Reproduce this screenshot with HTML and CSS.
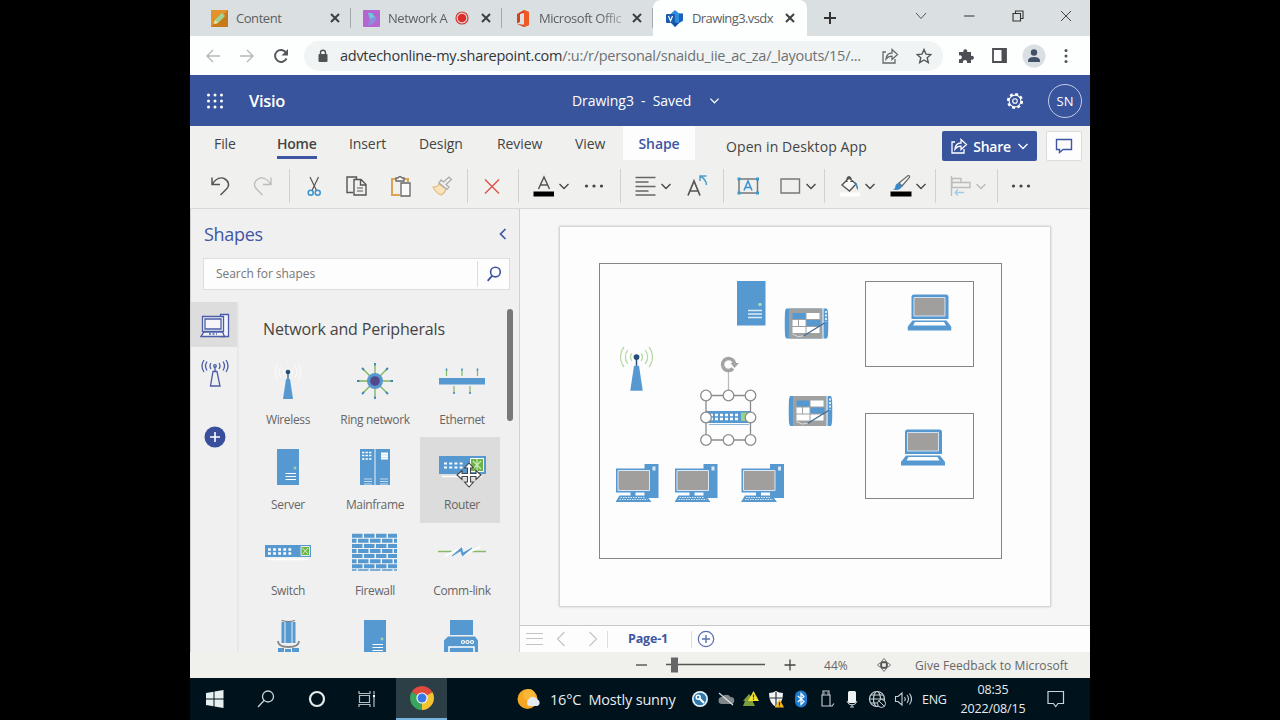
FILE: index.html
```html
<!DOCTYPE html>
<html lang="en">
<head>
    <meta charset="UTF-8">
    <meta name="viewport" content="width=device-width, initial-scale=1.0">
    <title>Drawing3.vsdx</title>
    <link rel="stylesheet" href="styles.css">
</head>
<body>
    <!-- Shared icons and stencil shapes -->
    <svg class="defs" width="0" height="0">
        <symbol id="close" viewBox="0 0 12 12"><path d="M2 2l8 8M10 2l-8 8" fill="none" stroke="currentColor" stroke-width="2"/></symbol>
        <symbol id="chevron" viewBox="0 0 12 12"><path d="M1.5 4L6 8.500 10.500 4" fill="none" stroke="currentColor" stroke-width="1.3"/></symbol>
        <symbol id="dots" viewBox="0 0 24 24"><g fill="#444"><circle cx="4.500" cy="12" r="1.6"/><circle cx="12" cy="12" r="1.6"/><circle cx="19.500" cy="12" r="1.6"/></g></symbol>
        <symbol id="share" viewBox="0 0 18 18"><path d="M5 5H2v11h12v-4M5 12c.5-4 3-6 6-6V2.500l5.500 5-5.500 5V9.200c-3 0-4.500.8-6 2.800z" fill="none" stroke="currentColor" stroke-width="1.3"/></symbol>

        <symbol id="wireless" viewBox="0 0 48 48">
            <path d="M22 21h4l3 20H19z" fill="#5698d0"/>
            <path d="M24 14v7" stroke="#264f78" stroke-width="1.200"/>
            <circle cx="24" cy="14" r="2.300" fill="#264f78"/>
            <path d="M20.300 11a5 5 0 0 0 0 6M27.700 11a5 5 0 0 1 0 6M17 8.500a9 9 0 0 0 0 11M31 8.500a9 9 0 0 1 0 11M14 6a13 13 0 0 0 0 16M34 6a13 13 0 0 1 0 16" fill="none" stroke="currentColor" stroke-width="1"/>
        </symbol>
        <symbol id="ring" viewBox="0 0 48 48">
            <path d="M24 7v32M8 23h32M12.500 11.500l23 23M35.500 11.500l-23 23" stroke="#7ab55c" stroke-width="1.300"/>
            <path d="M24 5v2.500M24 38.500V41M6 23h2.500M39.500 23H42M11 10l2 2M35 34l2 2M37 10l-2 2M13 34l-2 2" stroke="#3a86b8" stroke-width="1.800"/>
            <circle cx="24" cy="23" r="8" fill="#5698d0"/><circle cx="24" cy="23" r="4.800" fill="#54488a"/>
        </symbol>
        <symbol id="ethernet" viewBox="0 0 48 48">
            <path d="M8.500 12v6M24 12v6M39.500 12v6M16 28v7M32 28v7" stroke="#82b966" stroke-width="1.200"/>
            <path d="M8.500 10.500v2M24 10.500v2M39.500 10.500v2M16 34v2M32 34v2" stroke="#3a86b8" stroke-width="1.500"/>
            <path d="M1 20h46v6.500H1z" fill="#5698d0"/>
        </symbol>
        <symbol id="server" viewBox="0 0 48 48">
            <path d="M13 6h22v36H13z" fill="#5698d0"/>
            <path d="M21.500 30.500H32M21.500 33.500H32M21.500 36.500H32" stroke="#fff" stroke-width="1.100"/>
            <circle cx="31" cy="25" r="1.400" fill="#9fd6b0"/>
        </symbol>
        <symbol id="mainframe" viewBox="0 0 48 48">
            <path d="M9 6h14.500v36H9zM24.500 6H39v36H24.500z" fill="#5698d0"/>
            <path d="M11 9.500h9.500M11 12.500h9.500M11 16h9.500" stroke="#fff" stroke-width="1.700" stroke-dasharray="2.400 1.100"/>
            <path d="M30 9.500h7v7h-7z" fill="#fff"/><path d="M30 12h7M30 14.500h7" stroke="#b7d3ec" stroke-width=".7"/>
            <path d="M13 36h8M13 38.500h8M13 41h8M29 36h8M29 38.500h8M29 41h8" stroke="#c3daef"/>
        </symbol>
        <symbol id="router" viewBox="0 0 48 48">
            <path d="M1 13h47v18H1z" fill="#5698d0"/>
            <path d="M6 20.500h20M6 24.500h20" stroke="#fff" stroke-width="2.200" stroke-dasharray="3 2.200"/>
            <path d="M32.500 15.500h13v13h-13z" fill="#6cb545" stroke="#fff"/>
            <path d="M35 18l8 8M43 18l-8 8M39 16v12" stroke="#c9ecb4" stroke-width="1.200"/>
            <path d="M4 33.500h40" stroke="#fff" stroke-width="1.500"/>
        </symbol>
        <symbol id="switch" viewBox="0 0 48 48">
            <path d="M1 16h46v12H1z" fill="#5698d0"/>
            <path d="M4 20.500h25M4 24.500h25" stroke="#fff" stroke-width="2.400" stroke-dasharray="2.800 2.300"/>
            <path d="M37 17.500h8.500v9H37z" fill="#6cb545" stroke="#fff" stroke-width=".8"/>
            <path d="M38.500 19l5.500 6M44 19l-5.500 6" stroke="#d5f0c4"/>
            <path d="M4 30.500h40" stroke="#fff" stroke-width="1.300"/>
        </symbol>
        <symbol id="firewall" viewBox="0 0 48 48">
            <path d="M1 6.700h45M1 16.900h45M1 27.100h45M1 37.300h45" stroke="#5698d0" stroke-width="4" stroke-dasharray="10.500 1.500"/>
            <path d="M1 11.800h45M1 22h45M1 32.200h45" stroke="#5698d0" stroke-width="4" stroke-dasharray="10.500 1.500" stroke-dashoffset="6"/>
            <path d="M1 41h45" stroke="#5698d0" stroke-width="1.600" stroke-dasharray="10.500 1.500" stroke-dashoffset="6"/>
        </symbol>
        <symbol id="comm" viewBox="0 0 48 48">
            <path d="M0 22.500h13.500M34 22.500h14" stroke="#86b967" stroke-width="1.500"/>
            <path d="M7 27l18-9M24 27l18-9" stroke="#fff" stroke-width="1.500"/>
            <path d="M14 27l9.500-8.500 1.500 5.500 9-5-9.500 8-1.800-5.200z" fill="#5698d0" stroke="#5698d0" stroke-width=".8"/>
        </symbol>
        <symbol id="tower" viewBox="0 0 48 48">
            <path d="M17.500 8h3v21h-3zM21.500 8h6v21h-6zM28.500 8h3v21h-3z" fill="#5698d0"/>
            <path d="M17.500 6.500q7 2 13.500 0" fill="none" stroke="#777" stroke-width="1.200"/>
            <path d="M14 27q0 6 10.500 6T35 27" fill="none" stroke="#888" stroke-width="1.800"/>
            <path d="M14 34h6v14h-6zM21 35h6v13h-6zM28 34h7v14h-7z" fill="#5698d0"/>
        </symbol>
        <symbol id="printer" viewBox="0 0 48 48">
            <path d="M12 6h23v15H12zM10 22.500h27l3 4V42H6V26.500z" fill="#5698d0"/>
            <path d="M11 40v-7h25v7" fill="none" stroke="#fff" stroke-width="1.500"/>
            <g fill="none" stroke="#fff" stroke-width="1.200"><circle cx="25" cy="28" r="1.500"/><circle cx="29.500" cy="28" r="1.500"/><circle cx="34" cy="28" r="1.500"/></g>
        </symbol>

        <symbol id="pc" viewBox="0 0 44 40">
            <path d="M29 .5h14v34H29z" fill="#5698d0"/><path d="M37 3h3v4h-3z" fill="#d9e8f5"/>
            <path d="M.5 5h35.500v24H.5z" fill="#5698d0"/>
            <path d="M2.500 7h31.500v20H2.500z" fill="#a09f9d" stroke="#d8e8f6"/>
            <path d="M15 28h5v4h-5zM4 32h27l5 6.500H0z" fill="#5698d0"/>
            <path d="M5 34h25M4 36h28" stroke="#d8e8f6" stroke-width="1" stroke-dasharray="1.500 1"/>
        </symbol>
        <symbol id="laptop" viewBox="0 0 44 37">
            <path d="M4 3q0-2.500 2.500-2.500h32q2.500 0 2.500 2.500v22H4z" fill="#5698d0"/>
            <path d="M6.500 3.500h31v18.500h-31z" fill="#a09f9d" stroke="#cfe2f4"/>
            <path d="M5 26.500h34l5 6.500v3.500H0V33z" fill="#5698d0"/><path d="M7.500 28h29l2 3.500h-33z" fill="#fff"/>
        </symbol>
        <symbol id="tablet" viewBox="0 0 44 31">
            <path d="M2 .5h40q2 0 2 15t-2 15H2Q0 30.500 0 15.500T2 .5z" fill="#5698d0"/>
            <path d="M4.500.5h33.500v30H4.500z" fill="#9fa0a0"/><path d="M38.500 0v31" stroke="#fff"/>
            <path d="M8 5h13v6H8z" fill="#5698d0"/><path d="M22 5h13v6H22z" fill="#fff"/>
            <path d="M8 12h5.500v6H8zM14.500 12H21v6h-6.500z" fill="#fff"/><path d="M22 12h14v6H22z" fill="#5698d0"/>
            <path d="M8 19h13v6H8zM22 19h13v6H22z" fill="#fff"/>
            <path d="M19 28l21-13" stroke="#42688f" stroke-width="1.300"/><path d="M8 26q5 4 11 2" fill="none" stroke="#ddd"/>
            <path d="M41.500 3v11" stroke="#dcebf8" stroke-width="2" stroke-dasharray="2 1.500"/>
        </symbol>
    </svg>

    <div class="screen">
        <div class="tabstrip">
            <div class="tab first">
                <svg width="17" height="17" viewBox="0 0 17 17"><path d="M0 0h17v17H0z" fill="#e3932b"/><path d="M17 0v17H0z" fill="#c97a18"/><path d="M3 14l1-4 7-7 3 3-7 7z" fill="#9bd79c"/><path d="M3 14l1-4 3 3z" fill="#f6e3a8"/></svg>
                <span class="tab-title">Content</span>
                <svg class="x" width="12" height="12"><use href="#close"/></svg>
            </div>
            <div class="tab">
                <svg width="17" height="17" viewBox="0 0 17 17"><rect width="17" height="17" rx="1" fill="#b565cf"/><path d="M5 3h4l5 6-5 6H5l2-6z" fill="#8c8edb"/><path d="M5 3h4l3 4-5 2z" fill="#69c9da"/></svg>
                <span class="tab-title fade">Network A</span>
                <svg class="rec" width="14" height="14" viewBox="0 0 14 14"><circle cx="7" cy="7" r="6" fill="none" stroke="#d93a35" stroke-width="1.200"/><circle cx="7" cy="7" r="4.300" fill="#dc2f2a"/></svg>
                <svg class="x" width="12" height="12"><use href="#close"/></svg>
            </div>
            <div class="tab">
                <svg width="17" height="17" viewBox="0 0 17 17"><path d="M10 0l5 2v13l-5 2-7-3 7 .8V3L6 4v8l-3 1.500V4z" fill="#d8401c"/><path d="M10 0l5 2v13l-5 2z" fill="#ef5a24"/></svg>
                <span class="tab-title fade">Microsoft Offic</span>
                <svg class="x" width="12" height="12"><use href="#close"/></svg>
            </div>
            <div class="tab active">
                <svg width="17" height="17" viewBox="0 0 17 17"><path d="M9 0l4 3.500L17 4v7l-4 2-4 4-4-4V3.500z" fill="#2e8de0"/><path d="M13 3.500h4V10l-4 3z" fill="#1b62b8"/><path d="M5 12l4 5 4-4z" fill="#1550a0"/><rect y="4" width="9" height="9" rx="1" fill="#1a5cae"/><path d="M2.500 6l2 5 2-5" fill="none" stroke="#fff" stroke-width="1.200"/></svg>
                <span class="tab-title">Drawing3.vsdx</span>
                <svg class="x" width="12" height="12"><use href="#close"/></svg>
            </div>
            <svg class="newtab" width="14" height="14" viewBox="0 0 14 14"><path d="M7 1v12M1 7h12" stroke="#333" stroke-width="2"/></svg>
            <div class="window-buttons">
                <svg width="12" height="12" viewBox="0 0 12 12"><path d="M1 3l5 5.500L11 3" fill="none" stroke="#555"/></svg>
                <svg width="12" height="12" viewBox="0 0 12 12"><path d="M1 6h10.500" stroke="#333"/></svg>
                <svg width="12" height="12" viewBox="0 0 12 12"><path d="M1 3.500h7.500V11H1zM3.500 3V1H11v7.500H9" fill="none" stroke="#333" stroke-width="1.100"/></svg>
                <svg width="12" height="12" viewBox="0 0 12 12"><path d="M1 1l10 10M11 1L1 11" stroke="#444"/></svg>
            </div>
        </div>

        <div class="addressbar">
            <svg width="16" height="14" viewBox="0 0 16 14"><path d="M15 7H2M8 1L2 7l6 6" fill="none" stroke="#b4b7b9" stroke-width="1.400"/></svg>
            <svg width="16" height="14" viewBox="0 0 16 14"><path d="M1 7h13M8 1l6 6-6 6" fill="none" stroke="#b4b7b9" stroke-width="1.400"/></svg>
            <svg width="16" height="16" viewBox="0 0 16 16"><path d="M13.500 10.500A6 6 0 1 1 13 4.500" fill="none" stroke="#55585b" stroke-width="1.900"/><path d="M15 1v6.500H8.500z" fill="#55585b"/></svg>
            <div class="omnibox">
                <svg width="12" height="14" viewBox="0 0 12 14"><rect x="1.500" y="5" width="9" height="8" rx="1" fill="#505356"/><path d="M3.500 6V3.700a2.500 2.500 0 0 1 5 0V6" fill="none" stroke="#505356" stroke-width="1.400"/></svg>
                <span class="url">advtechonline-my.sharepoint.com<span>/:u:/r/personal/snaidu_iie_ac_za/_layouts/15/...</span></span>
                <svg class="send" width="18" height="18"><use href="#share"/></svg>
                <svg width="16" height="16" viewBox="0 0 16 16"><path d="M8 1.500l2 4.600 4.900.4-3.700 3.200 1.100 4.900L8 12l-4.300 2.600 1.100-4.900L1.100 6.500 6 6.100z" fill="none" stroke="#55585b" stroke-width="1.400"/></svg>
            </div>
            <div class="extensions">
                <svg width="17" height="16" viewBox="0 0 17 16"><path d="M1 4h4.500a2 2 0 1 1 3.600 0H13v4a2 2 0 1 1 0 3.600V15H9a2.200 2.200 0 1 0-4 0H1v-4a2 2 0 1 0 0-3.600z" fill="#4b4f53"/></svg>
                <svg width="15" height="15" viewBox="0 0 15 15"><path d="M1 1h13v13H1z" fill="none" stroke="#4b4f53" stroke-width="1.800"/><path d="M9.500 1H14v13H9.500z" fill="#4b4f53"/></svg>
                <svg class="profile" width="24" height="24" viewBox="0 0 24 24"><circle cx="12" cy="12" r="11.500" fill="#dadfe3"/><circle cx="12" cy="8.500" r="3.200" fill="#42506a"/><path d="M6 17q0-4 6-4t6 4v1H6z" fill="#42506a"/></svg>
                <svg width="6" height="16" viewBox="0 0 6 16"><g fill="#505356"><circle cx="3" cy="2.500" r="1.500"/><circle cx="3" cy="8" r="1.500"/><circle cx="3" cy="13.500" r="1.500"/></g></svg>
            </div>
        </div>

        <header class="appbar">
            <svg width="18" height="18" viewBox="0 0 18 18"><path d="M2.500 3h14M2.500 9h14M2.500 15h14" stroke="#fff" stroke-width="3" stroke-linecap="round" stroke-dasharray="0 6.500"/></svg>
            <h1>Visio</h1>
            <div class="doc-name">Drawing3&nbsp; -&nbsp; Saved <svg width="11" height="11"><use href="#chevron"/></svg></div>
            <svg class="gear" width="18" height="18" viewBox="0 0 18 18"><circle cx="9" cy="9" r="7" fill="none" stroke="#fff" stroke-width="2.200" stroke-dasharray="2.900 2.600"/><circle cx="9" cy="9" r="5.900" fill="none" stroke="#fff" stroke-width="1.100"/><circle cx="9" cy="9" r="2.300" fill="none" stroke="#fff" stroke-width="1.100"/></svg>
            <div class="avatar">SN</div>
        </header>

        <nav class="ribbon-tabs">
            <a class="file">File</a>
            <a class="home">Home</a>
            <a>Insert</a>
            <a>Design</a>
            <a>Review</a>
            <a>View</a>
            <a class="shape">Shape</a>
            <a class="desktop">Open in Desktop App</a>
            <button class="share-btn"><svg width="18" height="18"><use href="#share"/></svg>Share<svg width="12" height="12"><use href="#chevron"/></svg></button>
            <button class="comment-btn"><svg width="18" height="16" viewBox="0 0 18 16"><path d="M1.500 1.500h15v10H8l-3.500 3v-3h-3z" fill="none" stroke="#3f57a3" stroke-width="1.400"/></svg></button>
        </nav>

        <div class="toolbar">
            <svg width="24" height="24" viewBox="0 0 24 24"><path d="M4 3.500v7h8M4 10.500C8 4.500 13 2.500 17 5s5 7 1 10.500L12.500 21" fill="none" stroke="#555" stroke-width="1.500"/></svg>
            <svg width="24" height="24" viewBox="0 0 24 24"><path d="M20 3.500v7h-8M20 10.500C16 4.500 11 2.500 7 5s-5 7-1 10.500L11.500 21" fill="none" stroke="#bbb" stroke-width="1.300"/></svg>
            <i class="sep"></i>
            <svg width="24" height="24" viewBox="0 0 24 24"><path d="M8 3l6.500 13.500M16.500 3L10 16.500" stroke="#555" stroke-width="1.200"/><g fill="none" stroke="#3b93cf" stroke-width="1.500"><circle cx="8.700" cy="18.700" r="2.500"/><circle cx="15.700" cy="18.700" r="2.500"/></g></svg>
            <svg width="24" height="24" viewBox="0 0 24 24"><path d="M9 18.500H3V3h9.500v2.500M10 5.500h7l5 5V21H10zM16.500 5.500v5.500H22" fill="none" stroke="#555" stroke-width="1.400"/><path d="M13 14h6M13 17h6" stroke="#555"/></svg>
            <svg width="24" height="24" viewBox="0 0 24 24"><path d="M7 5H3v16h8M15 5h4v3" fill="none" stroke="#e0a353" stroke-width="2"/><path d="M7 7V4h2q2-3 4 0h2v3zM12 9h9v13h-9z" fill="#fafafa" stroke="#666" stroke-width="1.300"/></svg>
            <svg width="24" height="24" viewBox="0 0 24 24"><path d="M3 13q5 0 6-3l7 5q-1 4-5 6-5-2-8-8z" fill="#f8e3bf" stroke="#e6bd80" stroke-width="1.200"/><path d="M9 9l8 6.500 2-2.500-3-2.500 5.500-5-2.500-2.500-5.500 5L11 6z" fill="#eee" stroke="#aaa" stroke-width="1.200"/></svg>
            <i class="sep"></i>
            <svg width="24" height="24" viewBox="0 0 24 24"><path d="M5 5.500l14 14M19 5.500l-14 14" stroke="#e0504c" stroke-width="1.400"/></svg>
            <i class="sep"></i>
            <svg width="24" height="24" viewBox="0 0 24 24"><path d="M6.500 15L12 3l5.500 12M8.500 11h7" fill="none" stroke="#555" stroke-width="1.500"/><path d="M1.500 17.500H22V22.500H1.500z"/></svg>
            <svg width="12" height="12"><use href="#chevron"/></svg>
            <svg width="24" height="24"><use href="#dots"/></svg>
            <i class="sep"></i>
            <svg width="24" height="24" viewBox="0 0 24 24"><path d="M2.500 3.500h20M2.500 8h13M2.500 12.500h20M2.500 17h13M2.500 21h20" stroke="#666" stroke-width="1.300"/></svg>
            <svg width="12" height="12"><use href="#chevron"/></svg>
            <svg width="24" height="24" viewBox="0 0 24 24"><path d="M2 21.500L8 7l6 14.500M4 17h8" fill="none" stroke="#555" stroke-width="1.700"/><path d="M14 7V2h6.500M14.500 2.500q5.500 2.500 6 8.500" fill="none" stroke="#4f9fce" stroke-width="1.500"/></svg>
            <i class="sep"></i>
            <svg width="24" height="24" viewBox="0 0 24 24"><path d="M3 5h18.500v14H3z" fill="none" stroke="#777" stroke-width="1.500"/><path d="M8 16.500l4-9.500 4 9.500M9.500 13.500h5" fill="none" stroke="#3b93cf" stroke-width="1.500"/><path d="M1.500 3.500h3v3h-3zM20 3.500h3v3h-3zM1.500 17.500h3v3h-3zM20 17.500h3v3h-3z" fill="#3b9ace"/></svg>
            <svg width="24" height="24" viewBox="0 0 24 24"><path d="M3 5h18.500v14H3z" fill="none" stroke="#777" stroke-width="1.400"/></svg>
            <svg width="12" height="12"><use href="#chevron"/></svg>
            <i class="sep"></i>
            <svg width="24" height="24" viewBox="0 0 24 24"><path d="M2 18.500h20v4H2z" fill="#fff"/><path d="M4 11l7-7 7 6-6.500 7zM9 8V4.500q2-3.500 4 0V8" fill="#fafafa" stroke="#555" stroke-width="1.400"/><path d="M15 8q5-1 5 8-2-1-2-6z" fill="#3b7fb5"/></svg>
            <svg width="12" height="12"><use href="#chevron"/></svg>
            <svg width="24" height="24" viewBox="0 0 24 24"><path d="M1.500 17.500H22.500V22.500H1.500z"/><path d="M10 9L19 1.500q2.500 0 1.200 2.200L13 12z" fill="#f5f5f5" stroke="#666" stroke-width="1.200"/><path d="M9.500 9l3.500 3.500Q11 17 4 15.500q3-2 2.500-4Q7.500 9 9.500 9z" fill="#3888c8"/></svg>
            <svg width="12" height="12"><use href="#chevron"/></svg>
            <i class="sep"></i>
            <svg width="24" height="24" viewBox="0 0 24 24"><path d="M3.500 2v20M4 4.500h9v4H4zM4 8.500h18v5H4z" fill="none" stroke="#bcbcbc" stroke-width="1.400"/><path d="M16 18.500H7M10 15.500l-3 3 3 3" fill="none" stroke="#a3cbe2" stroke-width="1.300"/></svg>
            <svg class="off" width="12" height="12"><use href="#chevron"/></svg>
            <i class="sep"></i>
            <svg width="24" height="24"><use href="#dots"/></svg>
        </div>

        <main>
            <aside class="shapes">
                <div class="shapes-head">
                    <h2>Shapes</h2>
                    <svg width="8" height="12" viewBox="0 0 8 12"><path d="M6.500 1L1.500 6l5 5" fill="none" stroke="#3f57a3" stroke-width="1.700"/></svg>
                </div>
                <div class="search">
                    <span>Search for shapes</span>
                    <svg width="32" height="26" viewBox="0 0 32 26"><circle cx="18" cy="11" r="5" fill="none" stroke="#3f57a3" stroke-width="1.700"/><path d="M14.500 15L10 20" stroke="#3f57a3" stroke-width="1.900"/></svg>
                </div>
                <div class="stencils">
                    <div class="rail">
                        <div class="rail-item selected">
                            <svg width="30" height="28" viewBox="0 0 30 28"><g fill="#f5f5fa" stroke="#4a5da6" stroke-width="1.300"><path d="M20.500 2.500h8v22h-8z"/><path d="M2.500 4.500h21v15h-21z"/><path d="M5 7h16v10H5z"/><path d="M4 20h18.500l2 4.500H1z"/></g><path d="M9 22h8" stroke="#4a5da6" stroke-width="1.500" stroke-dasharray="2 1.500"/></svg>
                        </div>
                        <div class="rail-item">
                            <svg width="30" height="30" viewBox="0 0 30 30"><g fill="none" stroke="#4a5da6" stroke-width="1.300"><path d="M13 13.500h4l3 14.500h-9.500zM15 8.500v5"/><circle cx="15" cy="8" r="1.300"/><path d="M11 5q-2 3 0 6M19 5q2 3 0 6M7 3.500q-3 4.500 0 9M23 3.500q3 4.500 0 9M4 2q-4 6 0 12M26 2q4 6 0 12"/></g></svg>
                        </div>
                        <svg class="add" width="22" height="22" viewBox="0 0 22 22"><circle cx="11" cy="11" r="10.500" fill="#3a4f9b"/><path d="M11 6v10M6 11h10" stroke="#fff" stroke-width="1.600"/></svg>
                    </div>
                    <div class="gallery">
                        <h3>Network and Peripherals</h3>
                        <div class="tiles">
                            <div class="tile white-waves"><svg width="48" height="48"><use href="#wireless"/></svg>Wireless</div>
                            <div class="tile"><svg width="48" height="48"><use href="#ring"/></svg>Ring network</div>
                            <div class="tile"><svg width="48" height="48"><use href="#ethernet"/></svg>Ethernet</div>
                            <div class="tile"><svg width="48" height="48"><use href="#server"/></svg>Server</div>
                            <div class="tile"><svg width="48" height="48"><use href="#mainframe"/></svg>Mainframe</div>
                            <div class="tile hover"><svg width="48" height="48"><use href="#router"/></svg>Router
                                <svg class="cursor" width="26" height="26" viewBox="0 0 26 26"><path d="M13 1l4.500 5H14.500v5.500H20V8.500l5 4.500-5 4.500V14.500h-5.500V20h3L13 25l-4.500-5h3v-5.500H6v3L1 13l5-4.500v3h5.500V6h-3z" fill="#fff" stroke="#444" stroke-width="1.100"/></svg>
                            </div>
                            <div class="tile"><svg width="48" height="48"><use href="#switch"/></svg>Switch</div>
                            <div class="tile"><svg width="48" height="48"><use href="#firewall"/></svg>Firewall</div>
                            <div class="tile"><svg width="48" height="48"><use href="#comm"/></svg>Comm-link</div>
                            <div class="tile"><svg width="48" height="48"><use href="#tower"/></svg></div>
                            <div class="tile"><svg width="48" height="48"><use href="#server"/></svg></div>
                            <div class="tile"><svg width="48" height="48"><use href="#printer"/></svg></div>
                        </div>
                    </div>
                    <div class="scrollbar"></div>
                </div>
            </aside>

            <section class="workspace">
                <div class="canvas">
                    <svg class="page" width="490" height="379" viewBox="0 0 490 379">
                        <g fill="none" stroke="#858585" shape-rendering="crispEdges">
                            <path d="M39.500 36.500h402v295h-402z"/>
                            <path d="M305.500 54.500h108v85h-108z"/>
                            <path d="M305.500 186.500h108v85h-108z"/>
                        </g>
                        <path d="M177 54h28.500v44.500H177z" fill="#5698d0"/>
                        <path d="M188 83.500h14M188 87h14M188 90.500h14" stroke="#dcebf8" stroke-width="1.300"/>
                        <circle cx="200" cy="77.500" r="1.800" fill="#a9dcb9"/>
                        <svg class="green-waves" x="46.500" y="112.500" width="60" height="60"><use href="#wireless"/></svg>
                        <use href="#tablet" x="224.500" y="81" width="44" height="31"/>
                        <use href="#tablet" x="228.500" y="168.500" width="44" height="31"/>
                        <use href="#laptop" x="347.500" y="67" width="44" height="37"/>
                        <use href="#laptop" x="341" y="202" width="44" height="37"/>
                        <use href="#pc" x="55.500" y="236.500" width="44" height="40"/>
                        <use href="#pc" x="114.500" y="236.500" width="44" height="40"/>
                        <use href="#pc" x="181" y="236.500" width="44" height="40"/>
                        <!-- selected switch with its handles -->
                        <path d="M146 184h45v12h-45z" fill="#5698d0"/>
                        <path d="M150 188h30M150 192h30" stroke="#fff" stroke-width="2.400" stroke-dasharray="3 2"/>
                        <path d="M181 185.500h8v8.500h-8z" fill="#9bd386"/><path d="M149 197.500h40" stroke="#8bb7dd"/>
                        <path d="M168.500 143v25" stroke="#bbb" stroke-width="1.200"/>
                        <g fill="#fff" stroke="#8c8c8c" stroke-width="1.300">
                            <path d="M146 168.500h44.500v44.500H146z" fill="none"/>
                            <circle cx="146" cy="168.500" r="5.300"/><circle cx="168.500" cy="168.500" r="5.300"/><circle cx="190.500" cy="168.500" r="5.300"/>
                            <circle cx="146" cy="190.500" r="5.300"/><circle cx="190.500" cy="190.500" r="5.300"/>
                            <circle cx="146" cy="213" r="5.300"/><circle cx="168.500" cy="213" r="5.300"/><circle cx="190.500" cy="213" r="5.300"/>
                        </g>
                        <path d="M173 141.500a6 6 0 1 1 1.500-4" fill="none" stroke="#a3a3a3" stroke-width="3.500"/>
                        <path d="M170.500 136h8.500l-4.500 5z" fill="#a3a3a3"/>
                    </svg>
                </div>
                <div class="page-tabs">
                    <svg width="18" height="14" viewBox="0 0 18 14"><path d="M0 1.500h17M0 6.500h17M0 12.500h17" stroke="#c4c4c4" stroke-width="1.200"/></svg>
                    <svg width="10" height="16" viewBox="0 0 10 16"><path d="M8.500 1L1.500 8l7 7" fill="none" stroke="#c4c4c4" stroke-width="1.200"/></svg>
                    <svg width="10" height="16" viewBox="0 0 10 16"><path d="M1.500 1l7 7-7 7" fill="none" stroke="#c4c4c4" stroke-width="1.200"/></svg>
                    <span class="page-name">Page-1</span>
                    <svg width="18" height="18" viewBox="0 0 18 18"><circle cx="9" cy="9" r="7.700" fill="none" stroke="#5a6fae" stroke-width="1.200"/><path d="M9 5v8M5 9h8" stroke="#5a6fae" stroke-width="1.400"/></svg>
                </div>
            </section>
        </main>

        <div class="statusbar">
            <svg width="11" height="12" viewBox="0 0 11 12"><path d="M0 6h11" stroke="#444" stroke-width="1.300"/></svg>
            <svg width="111" height="18" viewBox="0 0 111 18"><path d="M12 8.500h99" stroke="#555" stroke-width="1.300"/><path d="M17 1.500h7v15h-7z" fill="#666"/></svg>
            <svg width="12" height="12" viewBox="0 0 12 12"><path d="M.5 6h11M6 .5v11" stroke="#444" stroke-width="1.300"/></svg>
            <span>44%</span>
            <svg width="14" height="14" viewBox="0 0 14 14"><path d="M4.500 4.500h5v5h-5z" fill="none" stroke="#555" stroke-width="1.300"/><path d="M7 .5l2.500 3h-5zM7 13.500l2.500-3h-5zM.5 7l3-2.500v5zM13.500 7l-3-2.500v5z" fill="none" stroke="#666" stroke-width=".9"/></svg>
            <span class="feedback">Give Feedback to Microsoft</span>
        </div>

        <footer class="taskbar">
            <svg width="18" height="18" viewBox="0 0 18 18"><path d="M0 3l7.500-1.200v6.700H0zM8.500 1.600L17.500 0v8.500h-9zM0 9.500h7.500v6.700L0 15zM8.500 9.500h9V18l-9-1.600z" fill="#e8eff0"/></svg>
            <svg width="18" height="18" viewBox="0 0 18 18"><circle cx="11" cy="6.500" r="5.500" fill="none" stroke="#ccd4d6" stroke-width="1.300"/><path d="M7 10.500L1 17" stroke="#ccd4d6" stroke-width="1.300"/></svg>
            <svg width="18" height="18" viewBox="0 0 18 18"><circle cx="9" cy="9" r="7" fill="none" stroke="#e4eaea" stroke-width="2.200"/></svg>
            <svg width="18" height="18" viewBox="0 0 18 18"><path d="M1 1v2.500h11V1M1 17v-2.500h11V17M1.500 5.500h10v7h-10zM16 1v3.500M16 8v9" fill="none" stroke="#b4bec1" stroke-width="1.200"/><path d="M15 5h2v2.500h-2z" fill="#fff"/></svg>
            <div class="task">
                <svg width="24" height="24" viewBox="0 0 24 24"><path d="M12 12L1.610 6A12 12 0 0 1 22.390 6z" fill="#df4a3c"/><path d="M12 12L22.390 6A12 12 0 0 1 12 24z" fill="#f4c430"/><path d="M12 12v12A12 12 0 0 1 1.610 6z" fill="#3ba55c"/><path d="M12 6h10.400L12 12z" fill="#df4a3c"/><path d="M17 15l-5 9V12z" fill="#f4c430"/><path d="M6.800 15L1.610 6 12 12z" fill="#3ba55c"/><circle cx="12" cy="12" r="5.600" fill="#fff"/><circle cx="12" cy="12" r="4.500" fill="#3b78e7"/></svg>
            </div>
            <svg width="24" height="22" viewBox="0 0 24 22"><circle cx="10.500" cy="11" r="10" fill="#f5a623"/><circle cx="12" cy="7" r="6" fill="#fbb838"/><path d="M12 18a4 4 0 0 1 0-7 5 5 0 0 1 8.500.5 3.500 3.500 0 0 1 0 6.500z" fill="#e3e9f1"/></svg>
            <span class="weather">16°C&nbsp; Mostly sunny</span>
            <svg width="18" height="18" viewBox="0 0 18 18"><circle cx="9" cy="9" r="8" fill="#e5f3fa"/><circle cx="9" cy="9" r="6.300" fill="#2d78ad"/><path d="M8 8l5 5" stroke="#fff" stroke-width="2"/><circle cx="7.200" cy="7.200" r="2" fill="none" stroke="#fff" stroke-width="1.400"/></svg>
            <svg width="18" height="18" viewBox="0 0 18 18"><path d="M5 14a3.500 3.500 0 0 1 0-7 5 5 0 0 1 8.500 0 3.500 3.500 0 0 1 .5 7z" fill="#7f878b"/><path d="M2 3l14 12" stroke="#dce1e3" stroke-width="1.200"/></svg>
            <svg width="18" height="18" viewBox="0 0 18 18"><path d="M1 16l2-5H1l6-7 4 5v3l2 4z" fill="#7f9c3c"/><path d="M11.500 1l5.500 10H6z" fill="#f4e430"/><path d="M11.500 4.500v3M11.500 8.500v1.300" stroke="#333" stroke-width="1.200"/></svg>
            <svg width="18" height="18" viewBox="0 0 18 18"><path d="M9 1q3 2 7 2 0 10-7 14Q2 13 2 3q4 0 7-2z" fill="#f2f4f4"/><path d="M9 2v14M2.500 8h13" stroke="#26343c" stroke-width="1.200"/><path d="M12.500 9l4.500 8.500H8z" fill="#f4b71f"/><path d="M12.500 12v3M12.500 15.500v1" stroke="#443300" stroke-width="1.200"/></svg>
            <svg width="18" height="18" viewBox="0 0 18 18"><rect x="3" y=".5" width="12" height="17" rx="6" fill="#1c7ed0"/><path d="M5.800 6l6.200 5.500-3 3V3.500l3 3L5.800 12" fill="none" stroke="#fff" stroke-width="1.200"/></svg>
            <svg width="18" height="18" viewBox="0 0 18 18"><path d="M6 5V1h6v4M5 5h8v11H5zM13 16h2l2-2.500M7.500 2.500v1M10.500 2.500v1" fill="none" stroke="#c8d0d3" stroke-width="1.100"/></svg>
            <svg width="18" height="18" viewBox="0 0 18 18"><rect x="5" y="1" width="8" height="12" rx="1.500" fill="#eef2f2"/><path d="M4 11q1 4 5 4t5-4M9 14v3M7 17h4" fill="none" stroke="#c8d0d3"/></svg>
            <svg width="18" height="18" viewBox="0 0 18 18"><g fill="none" stroke="#c8d0d3" stroke-width="1.200"><circle cx="9" cy="9" r="7.500"/><ellipse cx="9" cy="9" rx="3.500" ry="7.500"/><path d="M1.500 9h15M3 5h12M3 13h12"/></g><circle cx="13.500" cy="13.500" r="4" fill="#00111d" stroke="#c8d0d3"/><path d="M11 11l5 5" stroke="#c8d0d3"/></svg>
            <svg width="18" height="18" viewBox="0 0 18 18"><path d="M1.500 6.500H4L8 3v12l-4-3.500H1.500zM10.500 7q1.500 2 0 4M13 5q3 4 0 8M15.500 3.500q4 5.500 0 11" fill="none" stroke="#c8d0d3" stroke-width="1.100"/></svg>
            <span class="lang">ENG</span>
            <div class="clock">08:35<br>2022/08/15</div>
            <svg width="18" height="18" viewBox="0 0 18 18"><path d="M1 1.500h15.500v12H11l-2.300 3-2.300-3H1z" fill="none" stroke="#ccd4d6" stroke-width="1.200"/></svg>
        </footer>
    </div>
</body>
</html>
```
FILE: styles.css
```css
* {
    box-sizing: border-box;
}
body {
    margin: 0;
    height: 720px;
    display: flex;
    justify-content: center;
    overflow: hidden;
    background-color: #000;
    font-family: "Open Sans", "Noto Sans", sans-serif;
    color: #444;
}
svg {
    display: block;
    flex: none;
}
.defs {
    position: absolute;
}
h1, h2, h3 {
    margin: 0;
    font-weight: normal;
}
.screen {
    width: 900px;
    height: 720px;
    display: flex;
    flex-direction: column;
    background-color: #f0f0f0;
}

/* Browser tabs */
.tabstrip {
    height: 36px;
    display: flex;
    align-items: center;
    background-color: #dadfe1;
}
.tab {
    width: 151px;
    height: 36px;
    padding: 0 10px 0 12px;
    display: flex;
    align-items: center;
    font-size: 13px;
    letter-spacing: -0.45px;
    color: #5c6063;
    background: linear-gradient(#a4a9ac, #a4a9ac) right center / 1px 20px no-repeat;
}
.tab.first {
    width: 161px;
    padding-left: 21px;
}
.tab.active {
    width: 154px;
    padding: 0 11px 0 13px;
    background: #fdfefe;
    border-radius: 8px 8px 0 0;
}
.tab-title {
    flex: 1;
    margin-left: 8px;
    white-space: nowrap;
}
.tab.active .tab-title {
    margin-left: 9px;
    letter-spacing: -0.6px;
}
.tab-title.fade {
    -webkit-mask-image: linear-gradient(to right, #000 60px, transparent 105%);
    mask-image: linear-gradient(to right, #000 60px, transparent 105%);
}
.tab-title.fade + .rec {
    margin-right: 11px;
}
.x {
    color: #3c4043;
}
.newtab {
    margin-left: 16px;
}
.window-buttons {
    flex: 1;
    display: flex;
    justify-content: flex-end;
    gap: 36.5px;
    padding-right: 18px;
    margin-top: -5px;
}

/* Address bar */
.addressbar {
    height: 39px;
    display: flex;
    align-items: center;
    gap: 18px;
    padding-left: 15px;
    background-color: #fdfefe;
}
.omnibox {
    width: 639px;
    height: 30px;
    margin-left: -3px;
    padding: 0 11px 0 13px;
    display: flex;
    align-items: center;
    border-radius: 15px;
    background-color: #f1f4f4;
}
.url {
    flex: 1;
    padding-left: 11px;
    font-size: 14.5px;
    letter-spacing: -0.27px;
    white-space: nowrap;
    color: #333639;
}
.url span {
    color: #6d7174;
}
.send {
    margin-right: 17px;
    color: #66696c;
}
.extensions {
    display: flex;
    align-items: center;
    gap: 17px;
    margin-left: -3px;
}
.profile {
    margin-left: -2px;
}

/* Visio header */
.appbar {
    height: 51px;
    display: grid;
    grid-template-columns: 43px 323px 434px 42px 34px;
    align-items: center;
    padding-left: 16px;
    background-color: #37549c;
    color: #fff;
}
.appbar h1 {
    font-size: 16.5px;
    font-weight: 600;
    letter-spacing: -0.3px;
}
.doc-name {
    display: flex;
    align-items: center;
    gap: 18px;
    font-size: 14px;
    letter-spacing: -0.05px;
}
.avatar {
    width: 34px;
    height: 34px;
    border: 1px solid #c3cce4;
    border-radius: 50%;
    font-size: 13px;
    line-height: 32px;
    text-align: center;
}

/* Ribbon */
.ribbon-tabs {
    height: 42px;
    display: grid;
    grid-template-columns: 63px 72px 70px 78px 78px 48px 103px 216px 104px 36px;
    align-items: start;
    padding: 0 0 0 24px;
    font-size: 14px;
    letter-spacing: -0.1px;
    background-color: #f0f0ee;
}
.ribbon-tabs a {
    padding-top: 8px;
    line-height: 20px;
    white-space: nowrap;
}
.ribbon-tabs .home {
    width: 40px;
    height: 33px;
    font-weight: 600;
    letter-spacing: -0.25px;
    border-bottom: 3px solid #3f57a3;
}
.ribbon-tabs .shape {
    width: 72px;
    height: 34px;
    font-weight: 600;
    text-align: center;
    background-color: #fdfdfd;
    color: #3f57a3;
}
.ribbon-tabs .desktop {
    padding-top: 11px;
    letter-spacing: 0.1px;
}
.share-btn,
.comment-btn {
    height: 30px;
    margin-top: 5px;
    display: flex;
    align-items: center;
    justify-content: center;
    font-family: inherit;
}
.share-btn {
    width: 95px;
    gap: 5px;
    padding: 0;
    border: none;
    border-radius: 2px;
    background-color: #37549c;
    color: #fff;
    font-size: 14px;
    font-weight: 600;
    letter-spacing: -0.3px;
}
.share-btn svg:last-child {
    margin-left: 1px;
}
.comment-btn {
    width: 36px;
    padding: 0;
    border: 1px solid #dcdcdc;
    border-radius: 2px;
    background-color: #fdfdfd;
}
.toolbar {
    height: 41px;
    display: grid;
    grid-template-columns: 43px 38px 13px 42px 45px 41px 37px 13px 38px 14px 26px 24px 38px 13px 27px 26px 37px 13px 42px 27px 19px 14px 26px 25px 26px 20px 13px 27px 22px 12px 24px;
    align-items: center;
    padding: 0 0 4px 18px;
    border-bottom: 1px solid #d8d8d8;
    background-color: #f0f0ee;
    color: #444;
}
.sep {
    width: 1px;
    height: 34px;
    background-color: #d2d2d2;
}
.off {
    color: #bbb;
}

/* Shapes panel */
main {
    height: 443px;
    display: flex;
}
.shapes {
    width: 330px;
    display: flex;
    flex-direction: column;
    border-left: 1px solid #d0d0d0;
    border-right: 1px solid #d0d0d0;
    background-color: #f0f0f0;
}
.shapes-head {
    height: 49px;
    display: flex;
    align-items: center;
    justify-content: space-between;
    padding: 1px 12px 0 13px;
    color: #3f57a3;
}
.shapes-head h2 {
    font-size: 18px;
    letter-spacing: -0.3px;
}
.search {
    height: 32px;
    margin: 0 9px 12px 12px;
    display: flex;
    align-items: center;
    justify-content: space-between;
    padding-left: 12px;
    border: 1px solid #dedede;
    background-color: #fdfdfd;
    font-size: 12px;
    line-height: 16px;
    letter-spacing: -0.05px;
    color: #767676;
}
.search svg {
    border-left: 1px solid #ddd;
}
.stencils {
    height: 350px;
    display: flex;
    overflow: hidden;
}
.rail {
    width: 48px;
    display: flex;
    flex-direction: column;
    align-items: center;
    border-right: 2px solid #e8e8e8;
}
.rail-item {
    width: 46px;
    height: 45px;
    padding: 2px 0 0 2px;
    display: flex;
    align-items: center;
    justify-content: center;
}
.rail-item.selected {
    background-color: #dddddd;
}
.rail-item + .rail-item {
    margin-top: 2px;
}
.add {
    margin: 32px 0 0 1px;
}
.gallery {
    width: 270px;
    padding-left: 9px;
}
.gallery h3 {
    height: 50px;
    padding: 16px 0 0 15px;
    font-size: 16px;
    line-height: 22px;
    letter-spacing: -0.15px;
    white-space: nowrap;
}
.tiles {
    display: grid;
    grid-template-columns: repeat(3, 80px);
    grid-auto-rows: 85.400px;
    column-gap: 7px;
}
.tile {
    position: relative;
    padding-top: 6px;
    display: flex;
    flex-direction: column;
    align-items: center;
    gap: 5px;
    font-size: 12px;
    line-height: 17px;
    letter-spacing: -0.35px;
    white-space: nowrap;
    color: #666;
}
.tile.hover {
    margin: 0 2px 0 -2px;
    padding-left: 4px;
    background-color: #dcdcdc;
}
.white-waves svg {
    color: #fdfdfd;
}
.green-waves {
    color: #b5d9a0;
}
.cursor {
    position: absolute;
    left: 36px;
    top: 25px;
}
.scrollbar {
    width: 6px;
    height: 112px;
    margin: 7px 0 0 -2px;
    border-radius: 3px;
    background-color: #787878;
}

/* Drawing area */
.workspace {
    width: 570px;
    display: flex;
    flex-direction: column;
}
.canvas {
    height: 416px;
    padding: 18px 0 0 40px;
    background-color: #f6f6f6;
}
.page {
    background-color: #fdfdfd;
    box-shadow: 0 0 2px 1px #c6c6c6;
}
.page-tabs {
    height: 27px;
    display: flex;
    align-items: center;
    padding-left: 6px;
    border-top: 1px solid #c8c8c8;
    background-color: #fdfdfd;
}
.page-tabs svg:nth-child(2) {
    margin-left: 12px;
}
.page-tabs svg:nth-child(3) {
    margin-left: 22px;
}
.page-name {
    width: 85px;
    height: 17px;
    margin: 0 5px 0 9px;
    padding-right: 3px;
    border: solid #ddd;
    border-width: 0 1px;
    font-size: 12.5px;
    line-height: 16px;
    font-weight: 700;
    letter-spacing: -0.15px;
    text-align: center;
    color: #3f57a3;
}
.statusbar {
    height: 26px;
    display: grid;
    grid-template-columns: 18px 130px 40px 53px 38px 160px;
    align-items: center;
    padding-left: 446px;
    font-size: 12px;
    letter-spacing: 0.07px;
    white-space: nowrap;
    background-color: #f0f0ec;
    color: #666;
}

/* Windows taskbar */
.taskbar {
    height: 42px;
    display: grid;
    grid-template-columns: 51px 51px 50px 48px 111px 33px 141px 26px 25px 25px 25px 25px 26px 25px 26px 28px 33px 92px 18px;
    align-items: center;
    padding-left: 16px;
    background-color: #00121c;
    color: #e8ecee;
}
.task {
    width: 51px;
    height: 42px;
    display: flex;
    align-items: center;
    justify-content: center;
    border-bottom: 2px solid #76b4e0;
    margin-left: -10px;
    background-color: #2c3e46;
}
.weather {
    font-size: 14.5px;
    letter-spacing: -0.18px;
    white-space: nowrap;
}
.lang {
    font-size: 12.5px;
    letter-spacing: -0.3px;
}
.clock {
    width: 76px;
    font-size: 12.5px;
    line-height: 19px;
    letter-spacing: -0.15px;
    text-align: center;
}
```
